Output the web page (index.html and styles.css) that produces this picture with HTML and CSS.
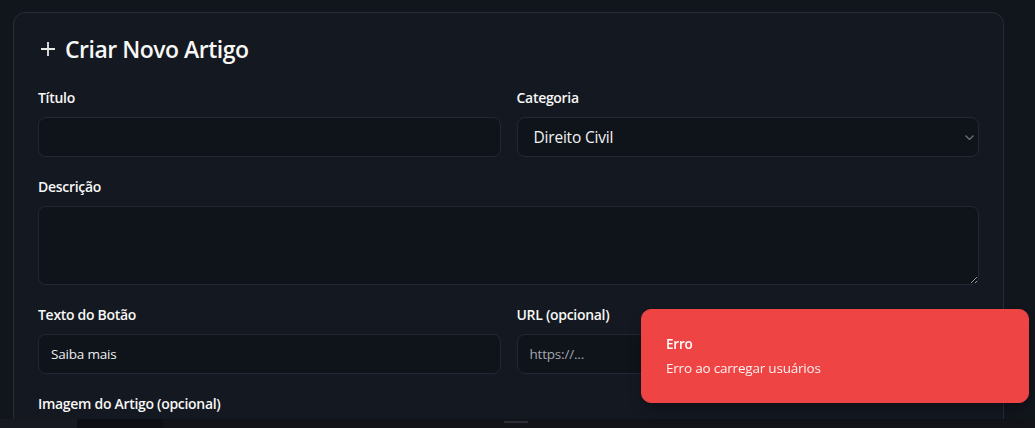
FILE: index.html
```html
<!DOCTYPE html>
<html lang="pt-BR">
<head>
<meta charset="utf-8">
<title>Criar Novo Artigo</title>
<link rel="stylesheet" href="styles.css">
</head>
<body>
<main class="page">
  <section class="card">
    <h2 class="card-title">
      <svg class="plus-icon" width="14" height="14" viewBox="0 0 14 14" aria-hidden="true">
        <path d="M0 7h14M7 0v14" fill="none" stroke="currentColor" stroke-width="1.8"/>
      </svg>
      Criar Novo Artigo
    </h2>
    <form class="form">
      <div class="row two-col">
        <div class="field">
          <label class="label" for="titulo">Título</label>
          <input class="input" id="titulo" type="text">
        </div>
        <div class="field">
          <label class="label" for="categoria">Categoria</label>
          <div class="select-wrap">
            <select class="input select" id="categoria">
              <option>Direito Civil</option>
            </select>
            <svg class="chevron" width="9" height="5" viewBox="0 0 9 5" aria-hidden="true">
              <path d="M0.5 0.5l4 4 4-4" fill="none" stroke="currentColor" stroke-width="1.3"/>
            </svg>
          </div>
        </div>
      </div>
      <div class="row">
        <div class="field">
          <label class="label" for="descricao">Descrição</label>
          <textarea class="input textarea" id="descricao"></textarea>
        </div>
      </div>
      <div class="row two-col">
        <div class="field">
          <label class="label" for="botao">Texto do Botão</label>
          <input class="input" id="botao" type="text" value="Saiba mais">
        </div>
        <div class="field">
          <label class="label" for="url">URL (opcional)</label>
          <input class="input" id="url" type="text" placeholder="https://...">
        </div>
      </div>
      <div class="row">
        <div class="field">
          <label class="label" for="imagem">Imagem do Artigo (opcional)</label>
        </div>
      </div>
    </form>
  </section>
</main>
<footer class="bottom-strip">
  <span class="seg seg-a"></span>
  <span class="seg seg-b"></span>
  <span class="seg seg-c"><span class="grip"></span></span>
</footer>
<div class="toast" role="alert">
  <div class="toast-title">Erro</div>
  <div class="toast-desc">Erro ao carregar usuários</div>
</div>
</body>
</html>
```
FILE: styles.css
```css
* { box-sizing: border-box; }

html, body {
  margin: 0;
  padding: 0;
  height: 428px;
  overflow: hidden;
  background: #11151c;
  color: #f5f6f8;
  font-family: "Open Sans", "Noto Sans", sans-serif;
  color-scheme: dark;
}

.page {
  height: 419px;
  overflow: hidden;
  padding: 12px 31px 0 13px;
}

.card {
  width: 991px;
  background: #141821;
  border: 1px solid #272c37;
  border-radius: 12px;
  padding: 24px;
  min-height: 600px;
}

.card-title {
  display: flex;
  align-items: center;
  margin: 0 0 26px;
  font-size: 23px;
  line-height: 24px;
  font-weight: 600;
  letter-spacing: -0.5px;
  color: #f7f7f5;
}

.plus-icon {
  margin: 0 10px 0 3px;
  color: #e8e8e6;
  flex: none;
}

.form {
  display: flex;
  flex-direction: column;
  gap: 19px;
}

.row.two-col {
  display: grid;
  grid-template-columns: 1fr 1fr;
  column-gap: 16px;
}

.field {
  display: flex;
  flex-direction: column;
}

.label {
  font-size: 14px;
  line-height: 20px;
  font-weight: 600;
  letter-spacing: -0.3px;
  padding-top: 1px;
  margin-bottom: 9px;
  color: #f7f7f5;
}

.input {
  width: 100%;
  height: 40px;
  background: #0f131a;
  border: 1px solid #232834;
  border-radius: 8px;
  padding: 0 12px;
  font-family: inherit;
  font-size: 13.5px;
  letter-spacing: -0.2px;
  color: #eceef1;
  outline: none;
}

.input::placeholder {
  color: #a3a7ae;
}

.select-wrap {
  position: relative;
}

.select {
  appearance: none;
  -webkit-appearance: none;
  padding-left: 16px;
  font-size: 15.5px;
  color: #f2f3f5;
}

.chevron {
  position: absolute;
  right: 5px;
  top: 18px;
  color: #6b6f78;
  pointer-events: none;
}

.textarea {
  height: 79px;
  padding: 8px 12px;
  resize: vertical;
  display: block;
}

.bottom-strip {
  display: flex;
  height: 9px;
  background: #111319;
}

.seg { display: block; height: 100%; }
.seg-a { width: 77px; background: #181a21; }
.seg-b { width: 86px; background: #0d0f14; }
.seg-c { flex: 1; background: #12141a; display: flex; }

.grip {
  width: 24px;
  height: 2px;
  margin: 2px 0 0 341px;
  background: #2c2f37;
}

.toast {
  position: fixed;
  right: 6px;
  bottom: 25px;
  width: 388px;
  background: #ef4444;
  border: 1px solid #ef4444;
  border-radius: 10px;
  padding: 24px 32px 24px 24px;
  display: flex;
  flex-direction: column;
  gap: 4px;
  color: #ffffff;
  box-shadow: 0 10px 15px -3px rgba(0,0,0,0.25), 0 4px 6px -4px rgba(0,0,0,0.2);
}

.toast-title {
  font-size: 13.5px;
  line-height: 20px;
  font-weight: 600;
  letter-spacing: -0.2px;
}

.toast-desc {
  font-size: 13.5px;
  line-height: 20px;
  letter-spacing: -0.2px;
  opacity: 0.92;
}
```
